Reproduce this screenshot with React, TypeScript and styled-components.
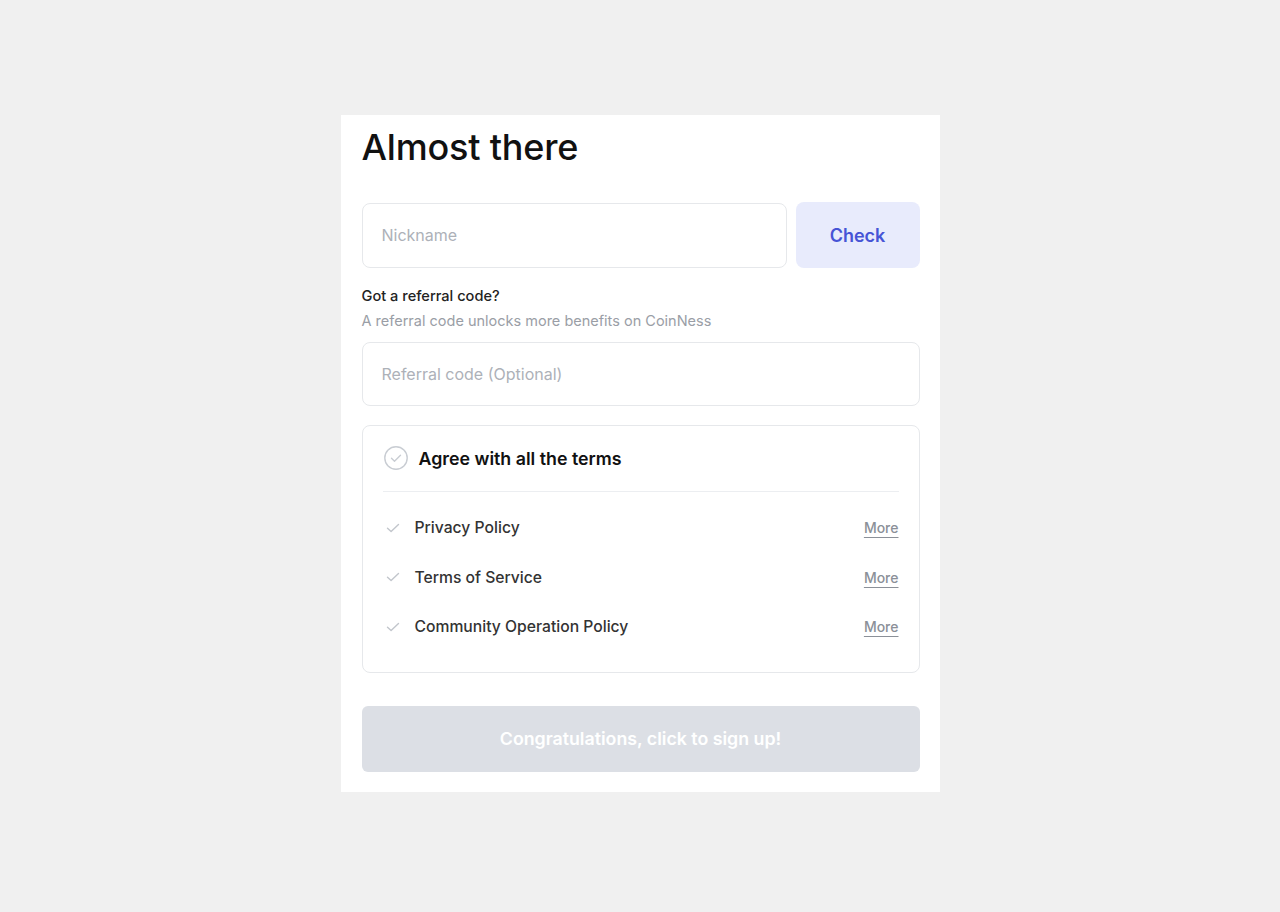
import React from 'react';
import styled, { createGlobalStyle } from 'styled-components';

const GlobalStyle = createGlobalStyle`
    * {
        box-sizing: border-box;
    }

    body {
        margin: 0;
        background: #f0f0f0;
        font-family: Inter, "Noto Sans", sans-serif;
        -webkit-font-smoothing: antialiased;
    }
`;

const Page = styled.div`
    display: flex;
    justify-content: center;
    align-items: flex-start;
    min-height: 912px;
    padding-top: 115px;
`;

const Card = styled.div`
    width: 599px;
    padding: 11px 20px 20px 21px;
    background: #ffffff;
    display: flex;
    flex-direction: column;
`;

const Title = styled.h1`
    margin: 0;
    font-size: 36px;
    line-height: 43px;
    font-weight: 500;
    color: #111111;
    letter-spacing: -0.2px;
`;

const NicknameRow = styled.div`
    display: flex;
    gap: 9px;
    margin-top: 33px;
    align-items: center;
`;

const Input = styled.input<{ $grow?: boolean; $height: number }>`
    flex: ${({ $grow }) => ($grow ? '1' : 'none')};
    width: ${({ $grow }) => ($grow ? 'auto' : '100%')};
    height: ${({ $height }) => $height}px;
    padding: 0 19px;
    border: 1px solid #e6e8eb;
    border-radius: 8px;
    font-family: Inter, sans-serif;
    font-size: 16px;
    color: #222222;
    outline: none;
    background: #ffffff;

    &::placeholder {
        color: #adb1b8;
    }
`;

const CheckButton = styled.button`
    width: 124px;
    height: 66px;
    border: none;
    border-radius: 8px;
    background: #e8ebfc;
    color: #4654d6;
    font-family: Inter, sans-serif;
    font-size: 18px;
    font-weight: 600;
    cursor: pointer;
`;

const Label = styled.div`
    margin-top: 18px;
    font-size: 14.6px;
    line-height: 20px;
    font-weight: 500;
    color: #222222;
`;

const Hint = styled.div`
    margin-top: 5px;
    margin-bottom: 11px;
    font-size: 14.5px;
    line-height: 20px;
    color: #9a9ea6;
`;

const TermsBox = styled.div`
    margin-top: 19px;
    border: 1px solid #e6e8eb;
    border-radius: 8px;
    padding: 20px;
`;

const AgreeRow = styled.div`
    display: flex;
    align-items: center;
    gap: 11px;
    height: 24px;
    padding-left: 1px;
`;

const AgreeText = styled.span`
    font-size: 17.8px;
    font-weight: 600;
    color: #111111;
`;

const Divider = styled.div`
    margin-top: 21px;
    height: 1px;
    background: #eceef1;
`;

const TermList = styled.ul`
    list-style: none;
    margin: 0;
    padding: 11px 0 0;
`;

const TermRow = styled.li`
    display: flex;
    align-items: center;
    height: 49.5px;
`;

const TermCheck = styled.span`
    display: flex;
    width: 32px;
    padding-left: 3px;
`;

const TermName = styled.span`
    flex: 1;
    font-size: 15.7px;
    font-weight: 500;
    color: #333333;
`;

const MoreLink = styled.a`
    font-size: 14px;
    font-weight: 500;
    color: #8b9098;
    text-decoration: underline;
    text-underline-offset: 4px;
    text-decoration-thickness: 1px;
    cursor: pointer;
`;

const SignUpButton = styled.button`
    margin-top: 33px;
    width: 100%;
    height: 66px;
    border: none;
    border-radius: 6px;
    background: #dcdfe5;
    color: #ffffff;
    font-family: Inter, sans-serif;
    font-size: 17.75px;
    font-weight: 600;
`;

const CircleCheck = () => (
    <svg width="24" height="24" viewBox="0 0 24 24" fill="none">
        <circle cx="12" cy="12" r="11.2" stroke="#c9cdd3" strokeWidth="1.4" />
        <path d="M7.5 12.3l3 3 6-6" stroke="#c9cdd3" strokeWidth="1.4" strokeLinecap="round" strokeLinejoin="round" />
    </svg>
);

const SmallCheck = () => (
    <svg width="14" height="14" viewBox="0 0 14 14" fill="none">
        <path d="M1.5 7.2l3.6 3.4L12.5 3.6" stroke="#c2c6cc" strokeWidth="1.4" strokeLinecap="round" strokeLinejoin="round" />
    </svg>
);

const terms = ['Privacy Policy', 'Terms of Service', 'Community Operation Policy'];

const App = () => {
    return (
        <>
            <GlobalStyle />
            <Page>
                <Card>
                    <Title>Almost there</Title>
                    <NicknameRow>
                        <Input $grow $height={65} placeholder="Nickname" />
                        <CheckButton>Check</CheckButton>
                    </NicknameRow>
                    <Label>Got a referral code?</Label>
                    <Hint>A referral code unlocks more benefits on CoinNess</Hint>
                    <Input $height={64} placeholder="Referral code (Optional)" />
                    <TermsBox>
                        <AgreeRow>
                            <CircleCheck />
                            <AgreeText>Agree with all the terms</AgreeText>
                        </AgreeRow>
                        <Divider />
                        <TermList>
                            {terms.map((term) => (
                                <TermRow key={term}>
                                    <TermCheck>
                                        <SmallCheck />
                                    </TermCheck>
                                    <TermName>{term}</TermName>
                                    <MoreLink>More</MoreLink>
                                </TermRow>
                            ))}
                        </TermList>
                    </TermsBox>
                    <SignUpButton disabled>Congratulations, click to sign up!</SignUpButton>
                </Card>
            </Page>
        </>
    );
};

export default App;
